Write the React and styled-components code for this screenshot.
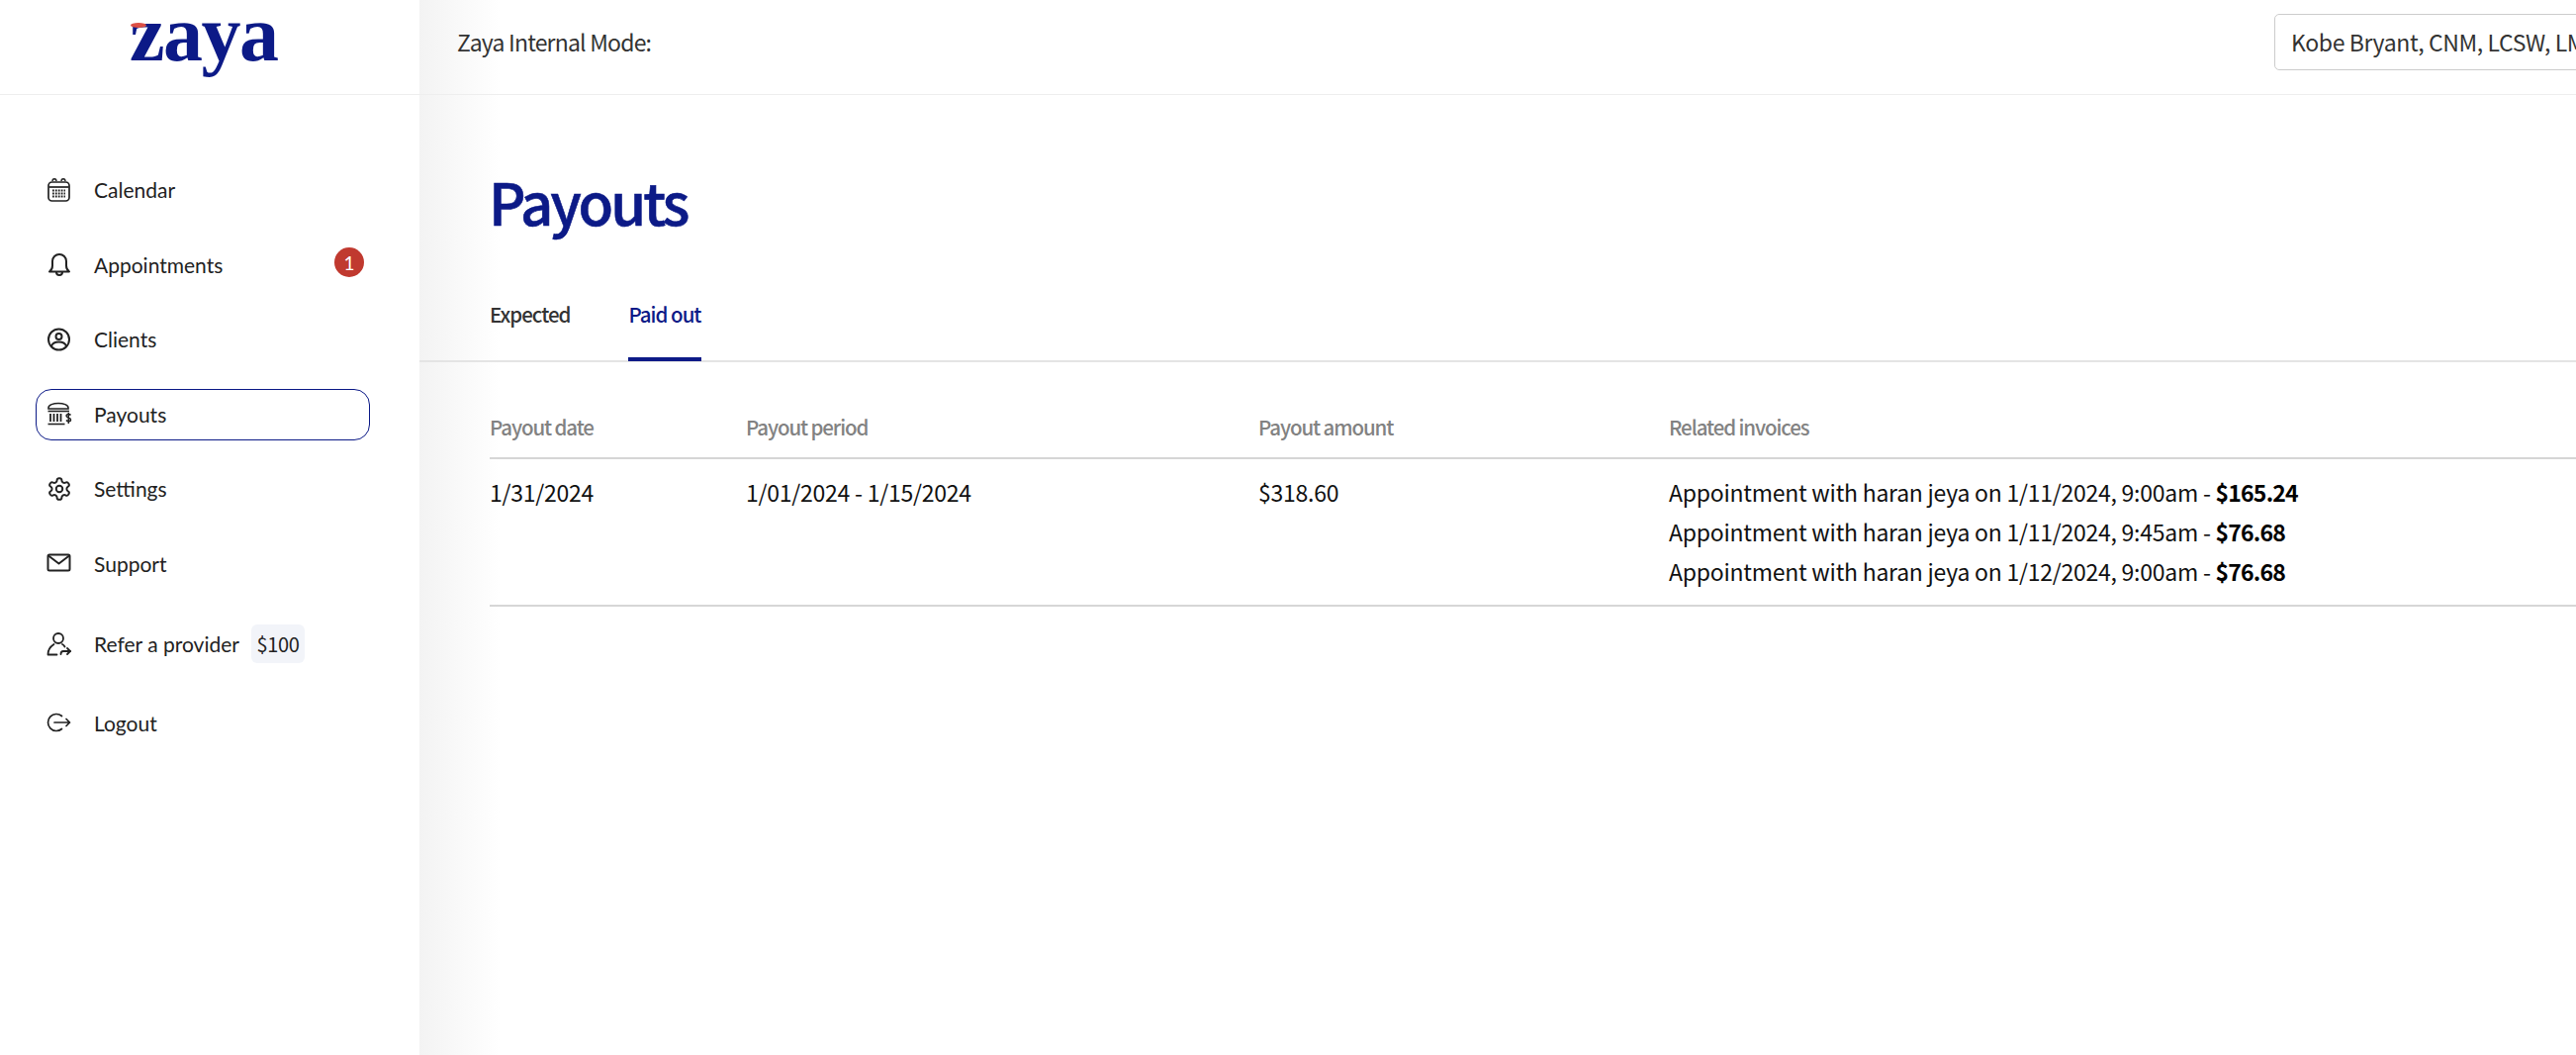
import React from 'react';
import styled, { createGlobalStyle } from 'styled-components';

const navy = '#0c1a87';

const GlobalStyle = createGlobalStyle`
    html, body {
        margin: 0;
        padding: 0;
        background: #fff;
        overflow: hidden;
    }
    * { box-sizing: border-box; }
`;

const IconCalendar = () => (
    <svg width="26" height="26" viewBox="0 0 26 26" fill="none" stroke="#222" strokeWidth="1.7">
        <rect x="2" y="5" width="21" height="19" rx="3.5" />
        <path d="M2.500 10h20" />
        <path d="M6 4c0-3 4-3 4 0M15 4c0-3 4-3 4 0" strokeWidth="1.4" />
        <path d="M6 13.500h13M6 16.500h13M6 19.500h13" strokeWidth="1.8" strokeDasharray="1.8 1.1" />
    </svg>
);
const IconBell = () => (
    <svg width="26" height="26" viewBox="0 0 26 26" fill="none" stroke="#222" strokeWidth="2" strokeLinejoin="round">
        <path d="M3 20.500c2-1.500 3-3 3-6V10a7 7 0 0 1 14 0v4.500c0 3 1 4.500 3 6z" />
        <path d="M10 21c0 4 6 4 6 0" />
    </svg>
);
const IconClient = () => (
    <svg width="26" height="26" viewBox="0 0 26 26" fill="none" stroke="#222" strokeWidth="2">
        <circle cx="12.500" cy="13" r="10.500" />
        <circle cx="12.500" cy="10" r="3" />
        <path d="M5 20c1.500-6 13.500-6 15 0" />
    </svg>
);
const IconBank = () => (
    <svg width="26" height="26" viewBox="0 0 26 26" fill="none" stroke="#222" strokeWidth="1.6">
        <path d="M2 7c0-6 20-6 20 0v1H2z" />
        <path d="M1.500 10.500h21.500" />
        <path d="M4 13v8M7.500 13v8M11 13v8M14.500 13v8" strokeWidth="1.8" />
        <path d="M1.500 23.500h17" />
        <path d="M24.500 14.500c-1-1.500-4.500-1.500-4.500.5 0 2.500 4.500 1.500 4.500 4s-3.500 2-4.500.5M22.300 12v11" strokeWidth="1.5" />
    </svg>
);
const IconSettings = () => (
    <svg width="26" height="26" viewBox="0 0 24 24" fill="none" stroke="#222" strokeWidth="1.8" strokeLinejoin="round">
        <circle cx="12" cy="12" r="3" />
        <path d="M12.220 2h-.44a2 2 0 0 0-2 2v.18a2 2 0 0 1-1 1.730l-.43.25a2 2 0 0 1-2 0l-.15-.08a2 2 0 0 0-2.730.730l-.22.380a2 2 0 0 0 .730 2.730l.15.1a2 2 0 0 1 1 1.720v.510a2 2 0 0 1-1 1.740l-.15.090a2 2 0 0 0-.730 2.730l.22.380a2 2 0 0 0 2.730.730l.15-.08a2 2 0 0 1 2 0l.43.25a2 2 0 0 1 1 1.730V20a2 2 0 0 0 2 2h.44a2 2 0 0 0 2-2v-.18a2 2 0 0 1 1-1.730l.43-.25a2 2 0 0 1 2 0l.15.08a2 2 0 0 0 2.730-.730l.22-.390a2 2 0 0 0-.730-2.730l-.15-.080a2 2 0 0 1-1-1.740v-.500a2 2 0 0 1 1-1.740l.15-.090a2 2 0 0 0 .730-2.730l-.22-.380a2 2 0 0 0-2.730-.730l-.15.080a2 2 0 0 1-2 0l-.43-.25a2 2 0 0 1-1-1.730V4a2 2 0 0 0-2-2z" />
    </svg>
);
const IconMail = () => (
    <svg width="26" height="26" viewBox="0 0 26 26" fill="none" stroke="#222" strokeWidth="2" strokeLinejoin="round">
        <rect x="1.500" y="4.500" width="22" height="16" rx="1.500" />
        <path d="M2 5.500l10.500 8 10.500-8" />
    </svg>
);
const IconRefer = () => (
    <svg width="26" height="26" viewBox="0 0 26 26" fill="none" stroke="#222" strokeWidth="1.8" strokeLinecap="round">
        <circle cx="12" cy="7" r="5" />
        <path d="M1.500 23c0-5 3-8 6-10M16 13c1 .5 2 1.500 2.500 2.500M1.500 23.500h9" />
        <path d="M24 20h-7c-1.500 0-2.500 1-2.500 3" />
        <path d="M21 17l3 3-3 3" />
    </svg>
);
const IconLogout = () => (
    <svg width="26" height="26" viewBox="0 0 26 26" fill="none" stroke="#222" strokeWidth="1.7" strokeLinecap="round" strokeLinejoin="round">
        <path d="M15.500 6.500a8.500 8.500 0 1 0 0 13" />
        <path d="M8 13h15.500M20 9.500l3.500 3.500-3.500 3.500" />
    </svg>
);

const NAV_ITEMS = [
    { label: 'Calendar', icon: <IconCalendar /> },
    { label: 'Appointments', icon: <IconBell />, badge: 1 },
    { label: 'Clients', icon: <IconClient /> },
    { label: 'Payouts', icon: <IconBank />, active: true },
    { label: 'Settings', icon: <IconSettings /> },
    { label: 'Support', icon: <IconMail /> },
    { label: 'Refer a provider', icon: <IconRefer />, chip: '$100', tall: true },
    { label: 'Logout', icon: <IconLogout /> },
];

const INVOICES = [
    { text: 'Appointment with haran jeya on 1/11/2024, 9:00am - ', amount: '$165.24' },
    { text: 'Appointment with haran jeya on 1/11/2024, 9:45am - ', amount: '$76.68' },
    { text: 'Appointment with haran jeya on 1/12/2024, 9:00am - ', amount: '$76.68' },
];

const App = () => (
    <Page>
        <GlobalStyle />
        <TopBar>
            <LogoCell>
                <Logo>
                    <LogoMark />
                    zaya
                </Logo>
            </LogoCell>
            <TopContent>
                <ModeLabel>Zaya Internal Mode:</ModeLabel>
                <ProviderSelect>Kobe Bryant, CNM, LCSW, LMFT</ProviderSelect>
            </TopContent>
        </TopBar>
        <Body>
            <Sidebar>
                {NAV_ITEMS.map(item => (
                    <NavItem key={item.label} $active={item.active} $tall={item.tall}>
                        <NavIcon>{item.icon}</NavIcon>
                        <span>{item.label}</span>
                        {item.chip && <Chip>{item.chip}</Chip>}
                        {item.badge && <Badge>{item.badge}</Badge>}
                    </NavItem>
                ))}
            </Sidebar>
            <Main>
                <Heading>
                    <Title>Payouts</Title>
                </Heading>
                <Tabs>
                    <Tab>Expected</Tab>
                    <Tab $active>Paid out</Tab>
                </Tabs>
                <Table>
                    <HeaderRow>
                        <span>Payout date</span>
                        <span>Payout period</span>
                        <span>Payout amount</span>
                        <span>Related invoices</span>
                    </HeaderRow>
                    <DataRow>
                        <span>1/31/2024</span>
                        <span>1/01/2024 - 1/15/2024</span>
                        <span>$318.60</span>
                        <div>
                            {INVOICES.map(inv => (
                                <Invoice key={inv.text}>
                                    {inv.text}<strong>{inv.amount}</strong>
                                </Invoice>
                            ))}
                        </div>
                    </DataRow>
                </Table>
            </Main>
        </Body>
    </Page>
);

export default App;

const Page = styled.div`
    width: 2604px;
    height: 1066px;
    overflow: hidden;
    display: flex;
    flex-direction: column;
    font-family: "Noto Sans CJK SC", "Noto Sans", sans-serif;
    background: linear-gradient(90deg, #fff 424px, #f3f3f3 424px, #fff 505px);
`;
const TopBar = styled.header`
    height: 96px;
    flex: none;
    display: flex;
    border-bottom: 1px solid #eeeeee;
`;
const LogoCell = styled.div`
    width: 424px;
    flex: none;
    background: #fff;
    padding-left: 131px;
`;
const Logo = styled.div`
    position: relative;
    display: inline-block;
    font-family: "Liberation Serif", serif;
    font-weight: 700;
    font-size: 80px;
    line-height: 68px;
    letter-spacing: -1.5px;
    color: ${navy};
`;
const LogoMark = styled.i`
    position: absolute;
    left: 1px;
    top: 23px;
    width: 16px;
    height: 5px;
    border-radius: 50%;
    background: #dc4f45;
`;
const TopContent = styled.div`
    flex: 1;
    min-width: 0;
    display: flex;
    align-items: center;
    justify-content: space-between;
    padding: 0 0 11px 38px;
    overflow: hidden;
`;
const ModeLabel = styled.div`
    font-size: 23px;
    letter-spacing: -0.8px;
    color: #333;
`;
const ProviderSelect = styled.div`
    width: 480px;
    margin-right: -175px;
    height: 57px;
    flex: none;
    border: 1px solid #ccc;
    border-radius: 5px;
    background: #fff;
    padding-left: 16px;
    display: flex;
    align-items: center;
    font-size: 23px;
    letter-spacing: -0.4px;
    color: #333;
    white-space: nowrap;
    overflow: hidden;
`;
const Body = styled.div`
    flex: 1;
    display: flex;
    min-height: 0;
`;
const Sidebar = styled.nav`
    width: 424px;
    flex: none;
    background: #fff;
    padding: 70.5px 50px 0 36px;
    display: flex;
    flex-direction: column;
    gap: 23.5px;
    font-family: Lato, sans-serif;
    font-size: 21px;
    font-weight: 400;
    color: #222;
`;
const NavItem = styled.div`
    position: relative;
    height: 52px;
    display: flex;
    align-items: center;
    padding: 0 0 2px 10px;
    border: 1px solid ${props => (props.$active ? navy : 'transparent')};
    border-radius: 16px;
    ${props => props.$tall && 'margin: 6px 0 4px;'}
`;
const NavIcon = styled.span`
    width: 48px;
    flex: none;
    display: flex;
    align-items: center;
`;
const Chip = styled.span`
    margin-left: 12px;
    padding: 0 5.500px;
    height: 39px;
    display: flex;
    align-items: center;
    border-radius: 6px;
    background: #f2f4f9;
    font-family: "Noto Sans CJK SC", sans-serif;
    font-size: 20px;
    letter-spacing: -0.3px;
    font-weight: 400;
`;
const Badge = styled.span`
    position: absolute;
    left: 301px;
    top: 7px;
    width: 30px;
    height: 30px;
    border-radius: 50%;
    background: #c0392f;
    color: #fff;
    font-size: 19px;
    display: flex;
    align-items: center;
    justify-content: center;
`;
const Main = styled.main`
    flex: 1;
    min-width: 0;
    display: flex;
    flex-direction: column;
`;
const Heading = styled.div`
    padding: 72px 0 0 70px;
    height: 172px;
`;
const Title = styled.h1`
    margin: 0;
    font-size: 58px;
    line-height: 70px;
    font-weight: 500;
    letter-spacing: -3px;
    -webkit-text-stroke: 0.6px ${navy};
    color: ${navy};
`;
const Tabs = styled.div`
    height: 98px;
    padding: 0 0 0 71px;
    display: flex;
    gap: 59px;
    border-bottom: 2px solid #e4e4e4;
`;
const Tab = styled.div`
    height: 97px;
    padding-top: 33px;
    font-size: 20.5px;
    letter-spacing: -1px;
    line-height: 32px;
    font-weight: 500;
    color: ${props => (props.$active ? navy : '#333')};
    border-bottom: 4px solid ${props => (props.$active ? navy : 'transparent')};
`;
const Table = styled.div`
    margin-left: 71px;
`;
const HeaderRow = styled.div`
    display: grid;
    grid-template-columns: 259px 518px 415px 1fr;
    height: 98px;
    padding-top: 49px;
    font-size: 20.5px;
    letter-spacing: -1.1px;
    line-height: 32px;
    font-weight: 500;
    color: #828282;
    border-bottom: 2px solid #d6d6d6;
`;
const DataRow = styled.div`
    display: grid;
    grid-template-columns: 259px 518px 415px 1fr;
    padding: 13px 0 14px;
    font-size: 23px;
    letter-spacing: -0.25px;
    line-height: 40px;
    color: #111;
    border-bottom: 2px solid #d6d6d6;
`;
const Invoice = styled.div`
    color: #111;
    strong { font-weight: 700; color: #000; letter-spacing: -0.8px; }
`;
